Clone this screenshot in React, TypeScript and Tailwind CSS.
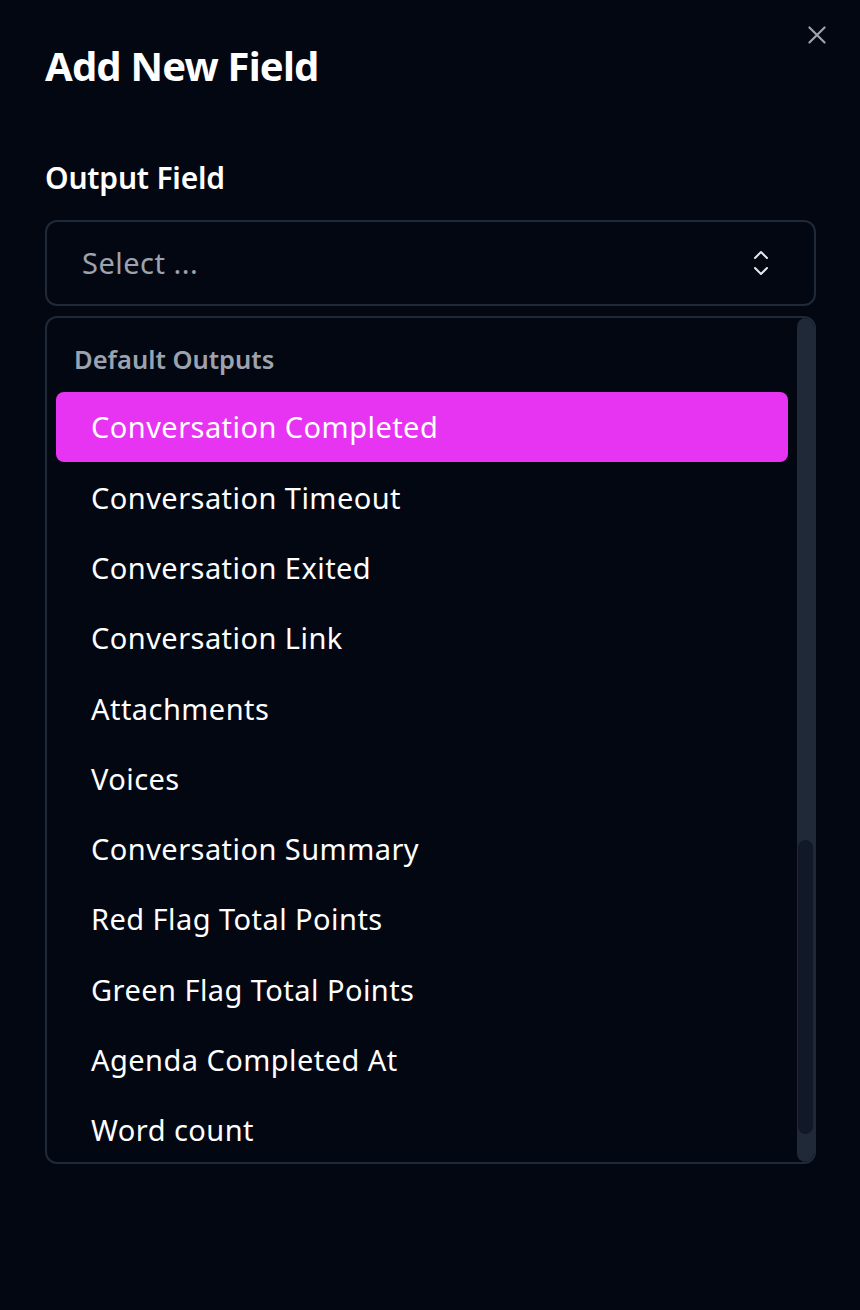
import React from "react";

const items = [
  "Conversation Completed",
  "Conversation Timeout",
  "Conversation Exited",
  "Conversation Link",
  "Attachments",
  "Voices",
  "Conversation Summary",
  "Red Flag Total Points",
  "Green Flag Total Points",
  "Agenda Completed At",
  "Word count",
];

export default function App() {
  return (
    <div
      className="relative w-[860px] h-[1310px] bg-[#030712] text-white overflow-hidden"
      style={{ fontFamily: '"Noto Sans", "Open Sans", sans-serif' }}
    >
      <button className="absolute right-[30px] top-[22px] text-[#9ca3af]" aria-label="Close">
        <svg width="26" height="26" viewBox="0 0 24 24" fill="none" stroke="currentColor" strokeWidth="2" strokeLinecap="round">
          <path d="M5 5L19 19M19 5L5 19" />
        </svg>
      </button>
      <div className="px-[45px] pt-[40px]">
        <h1 className="text-[40px] leading-[52px] font-bold tracking-[-0.8px]">Add New Field</h1>
        <div className="mt-[66px] text-[30px] leading-[40px] font-semibold tracking-[-0.2px]">Output Field</div>
        <div className="mt-[22px] h-[86px] w-[771px] rounded-[12px] border-2 border-[#1f2937] flex items-center justify-between pl-[35px] pr-[44px]">
          <span className="text-[29px] tracking-[0.5px] text-[#9ca3af]">Select ...</span>
          <svg width="18" height="26" viewBox="0 0 18 26" fill="none" stroke="#e5e7eb" strokeWidth="2" strokeLinecap="round" strokeLinejoin="round">
            <path d="M3 8L9 2L15 8" />
            <path d="M3 18L9 24L15 18" />
          </svg>
        </div>
        <div className="relative mt-[10px] h-[848px] w-[771px] rounded-[12px] border-2 border-[#1f2937] overflow-hidden">
          <div className="pl-[9px] pr-[26px] pt-[8px]">
            <div className="h-[66px] flex items-center pl-[18px] text-[25.5px] font-semibold text-[#9ca3af]">Default Outputs</div>
            {items.map((t, i) => (
              <div
                key={t}
                className={
                  i === 0
                    ? "h-[70.3px] rounded-[8px] bg-[#e733f2] flex items-center pl-[35px] text-[29px] tracking-[0.45px]"
                    : "h-[70.3px] flex items-center pl-[35px] text-[29px] tracking-[0.45px]"
                }
              >
                {t}
              </div>
            ))}
          </div>
          <div className="absolute right-0 top-0 bottom-0 w-[17px] rounded-[9px] bg-[#1f2937]">
            <div className="absolute left-[1px] right-[1px] top-[522px] h-[294px] rounded-[8px] bg-[#111827]" />
          </div>
        </div>
      </div>
    </div>
  );
}
